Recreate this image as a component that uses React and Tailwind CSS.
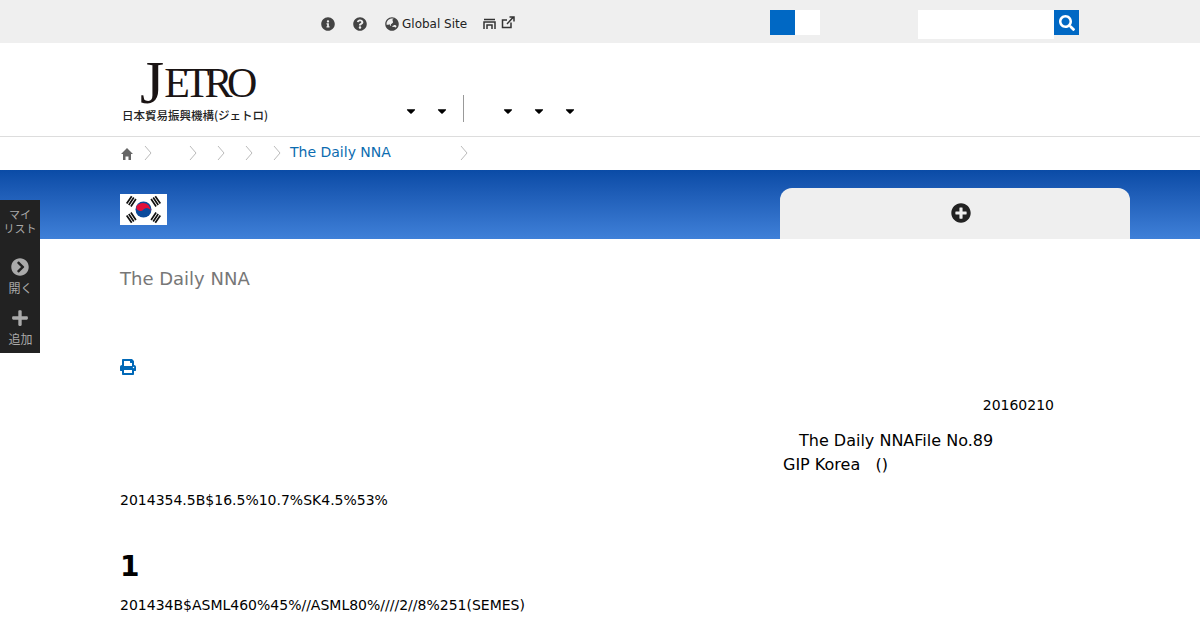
import React from "react";
import { FaInfoCircle, FaQuestionCircle, FaGlobeAsia, FaSearch, FaPrint, FaPlus, FaChevronCircleRight, FaPlusCircle, FaCaretDown } from "react-icons/fa";

const Sep = () => (
  <svg width="8" height="16" viewBox="0 0 8 16" className="shrink-0" fill="none" stroke="#bbb" strokeWidth="1">
    <path d="M1 1l6 7-6 7" />
  </svg>
);

const Caret = () => <FaCaretDown className="text-[14px] text-black" />;

const Flag = () => (
  <svg width="47" height="31" viewBox="0 0 47 31" className="block bg-white">
    <circle cx="23.5" cy="15.5" r="8" fill="#0a4a9c" />
    <path d="M16.500 12a8 8 0 0 1 14 7 4 4 0 0 0-7-3.500 4 4 0 0 1-7-3.500z" fill="#e0103a" />
    <g stroke="#111" strokeWidth="1.700">
      <path d="M6.700 9.600l5-7.400M8.800 11l5-7.400M10.900 12.400l5-7.400" />
      <path d="M40.300 9.600l-5-7.400M38.200 11l-5-7.400M36.100 12.400l-5-7.400" />
      <path d="M6.700 21.400l5 7.400M8.800 20l5 7.400M10.900 18.600l5 7.400" />
      <path d="M40.300 21.400l-5 7.400M38.200 20l-5 7.400M36.100 18.600l-5 7.400" />
    </g>
  </svg>
);

const App = () => {
  return (
    <div className="relative h-[630px] overflow-hidden bg-white text-black font-['DejaVu_Sans','Noto_Sans_CJK_JP',sans-serif]">

      {/* Top bar */}
      <div className="flex h-[43px] items-start bg-[#efefef]">
        <div className="ml-[321px] flex h-[47px] items-center text-[#444]">
          <FaInfoCircle className="text-[14px]" />
          <FaQuestionCircle className="ml-[18px] text-[14px]" />
          <FaGlobeAsia className="ml-[18px] text-[14px]" />
          <span className="ml-[3px] text-[12px] text-[#222]">Global Site</span>
          <svg width="13" height="11" viewBox="0 0 13 11" className="ml-[16px]" fill="none" stroke="#333" strokeWidth="1.500">
            <path d="M1 11V4h11v7M1 1.500h11M4 11V7h5v4" />
          </svg>
          <svg width="14" height="13" viewBox="0 0 14 13" className="ml-[5px] mb-[2px]" fill="none" stroke="#333" strokeWidth="1.500">
            <path d="M10 6.500V11.500H1.500V4H6M6 8l6-6.500M8.500 1h4.500v4.500" />
          </svg>
        </div>
        <div className="ml-[255px] mt-[10px] flex">
          <div className="h-[25px] w-[25px] bg-[#0068c4]" />
          <div className="h-[25px] w-[25px] bg-white" />
        </div>
        <div className="ml-[98px] mt-[10px] flex items-start">
          <div className="h-[29px] w-[136px] bg-white" />
          <div className="flex h-[25px] w-[25px] items-center justify-center bg-[#0068c4]">
            <FaSearch className="text-[16px] text-white" />
          </div>
        </div>
      </div>

      {/* Logo and global nav */}
      <div className="flex h-[94px] border-b border-[#ddd] pl-[120px]">
        <div className="w-[150px] pt-[8px]">
          <div className="flex h-[56px] items-start pl-[20px] font-['Liberation_Serif',serif] text-[#1a1414]">
            <span className="mt-[6px] text-[62px] leading-[50px]">J</span>
            <span className="mt-[11px] text-[42px] leading-[42px] tracking-[-5.500px]">ETRO</span>
          </div>
          <div className="ml-[2px] whitespace-nowrap text-[11.500px] font-medium font-['Noto_Sans_CJK_JP',sans-serif] leading-[16px] text-[#222]">日本貿易振興機構(ジェトロ)</div>
        </div>
        <div className="ml-[133.500px] mt-[52px] flex h-[27px] items-start">
          <div className="mt-[9px] flex gap-[17px]"><Caret /><Caret /></div>
          <div className="ml-[14.500px] h-[27px] w-px bg-[#999]" />
          <div className="ml-[36.500px] mt-[9px] flex gap-[17px]"><Caret /><Caret /><Caret /></div>
        </div>
      </div>

      {/* Breadcrumb */}
      <div className="flex h-[33px] items-center pb-[2px] pl-[121px] text-[14px]">
        <svg width="12" height="12" viewBox="0 0 12 12" className="mt-[3px]" fill="#666">
          <path d="M6 0l6 6h-2v6H7.500V8.500h-3V12H2V6H0z" />
        </svg>
        <span className="ml-[11px]"><Sep /></span>
        <span className="ml-[37px]"><Sep /></span>
        <span className="ml-[20px]"><Sep /></span>
        <span className="ml-[20px]"><Sep /></span>
        <span className="ml-[20px]"><Sep /></span>
        <span className="ml-[9px] text-[#0b6cb0]">The Daily NNA</span>
        <span className="ml-[69px]"><Sep /></span>
      </div>

      {/* Blue band */}
      <div className="flex h-[69px] items-start justify-between bg-gradient-to-b from-[#0a4ba6] to-[#3f80d8] pl-[120px] pr-[70px]">
        <div className="mt-[24px]"><Flag /></div>
        <div className="mt-[18px] flex h-[51px] w-[350px] items-start justify-center rounded-t-[12px] bg-[#efefef] pl-[12px] pt-[15px]">
          <FaPlusCircle className="text-[20px] text-[#222]" />
        </div>
      </div>

      {/* Content */}
      <div className="pl-[120px] pr-[146px]">
        <h1 className="mt-[27px] text-[18px] font-normal leading-[26px] text-[#777]">The Daily NNA</h1>
        <FaPrint className="mt-[67px] text-[16px] text-[#0068b7]" />
        <p className="mt-[20px] text-right text-[14px] leading-[20px]">20160210</p>
        <div className="mt-[14px] pl-[663px] text-[16px] leading-[24px]">
          <p className="pl-[16px]">The Daily NNAFile No.89</p>
          <p>GIP Korea&nbsp;&nbsp; ()</p>
        </div>
        <p className="mt-[13px] whitespace-nowrap text-[14px] leading-[20px]">2014354.5B$16.5%10.7%SK4.5%53%</p>
        <h2 className="mt-[35px] text-[28px] font-bold leading-[44px]">1</h2>
        <p className="mt-[6px] whitespace-nowrap text-[14px] leading-[20px]">201434B$ASML460%45%//ASML80%////2//8%251(SEMES)</p>
      </div>

      {/* My list side tab */}
      <div className="absolute left-0 top-[200px] flex h-[153px] w-[40px] flex-col items-center bg-[#222] text-[#aaa]">
        <div className="flex h-[50px] w-full flex-col items-center pt-[9px] text-[11px] leading-[14px]">
          <span>マイ</span>
          <span>リスト</span>
        </div>
        <div className="flex h-[51px] w-full flex-col items-center pt-[8px] text-[12px] leading-[17px]">
          <FaChevronCircleRight className="mb-[5px] text-[18px] text-[#aaa]" />
          <span className="pl-px">開く</span>
        </div>
        <div className="flex h-[52px] w-full flex-col items-center pt-[8px] text-[12px] leading-[17px]">
          <FaPlus className="mb-[5px] text-[18px] text-[#aaa]" />
          <span className="pl-px">追加</span>
        </div>
      </div>
    </div>
  );
};

export default App;
